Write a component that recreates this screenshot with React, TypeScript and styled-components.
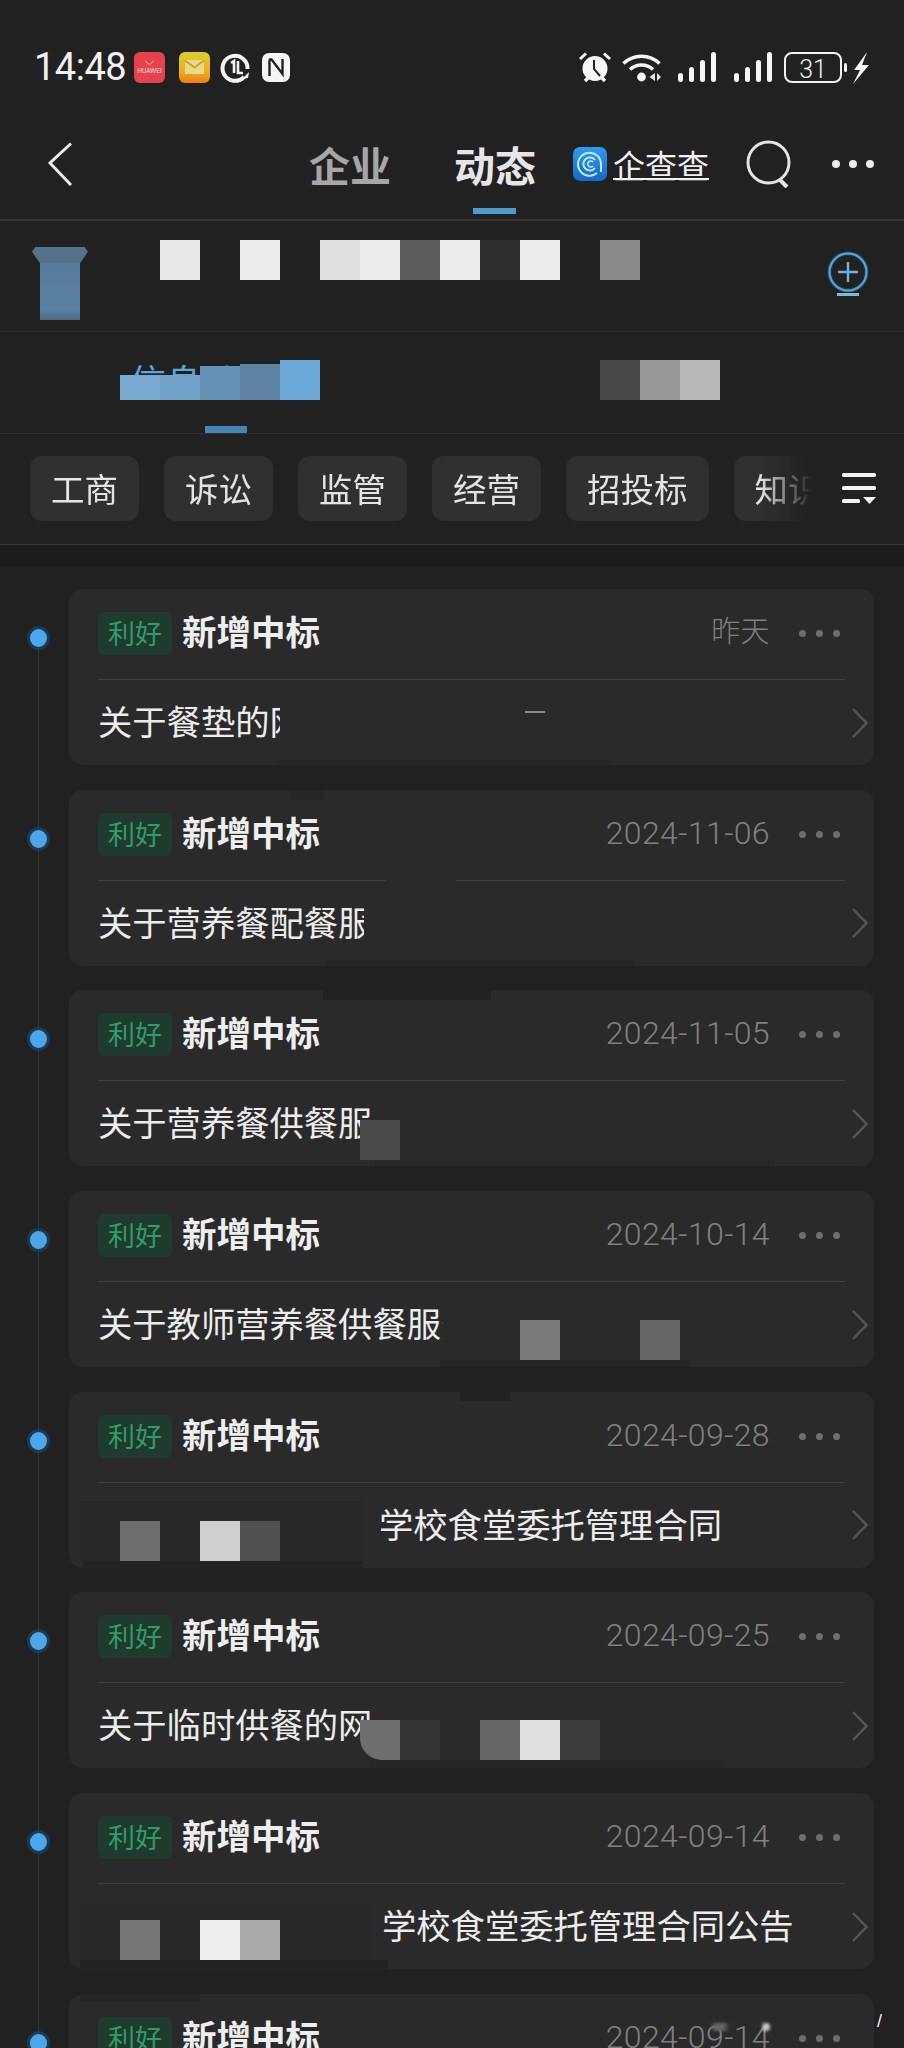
import React from 'react';
import styled, { createGlobalStyle } from 'styled-components';

const GlobalStyle = createGlobalStyle`
  html, body {
    margin: 0;
    padding: 0;
    background: #212121;
  }
  * {
    box-sizing: border-box;
  }
`;

const Page = styled.div`
  position: relative;
  width: 904px;
  height: 2048px;
  overflow: hidden;
  background: #212121;
  color: #eee;
  font-family: 'Noto Sans CJK SC', 'Noto Sans', sans-serif;
`;

/* status bar */
const StatusBar = styled.div`
  height: 100px;
  padding: 52px 34px 0 34px;
  display: flex;
  justify-content: space-between;
  align-items: flex-start;
`;

const StatusGroup = styled.div<{ $gap: number }>`
  display: flex;
  align-items: center;
  gap: ${p => p.$gap}px;
  height: 31px;
`;

const Time = styled.span`
  font-family: Roboto, sans-serif;
  font-size: 38px;
  line-height: 31px;
  letter-spacing: -0.5px;
  color: #f2f2f2;
  width: 90px;
  white-space: nowrap;
`;

/* header */
const Header = styled.div`
  height: 121px;
  padding: 8px 0 0 48px;
  display: flex;
  align-items: center;
  border-bottom: 2px solid #333;
`;

const HeaderTabs = styled.div`
  display: flex;
  gap: 63px;
  margin-left: 237px;
`;

const HeaderTab = styled.div<{ $active?: boolean }>`
  position: relative;
  width: 82px;
  font-size: 41px;
  line-height: 50px;
  font-weight: 700;
  white-space: nowrap;
  color: ${p => (p.$active ? '#e6e6e6' : '#a6a6a6')};

  ${p => p.$active && `
    &::after {
      content: '';
      position: absolute;
      left: 19px;
      top: 69px;
      width: 43px;
      height: 6px;
      background: #4f9bcb;
    }
  `}
`;

const BrandBlock = styled.div`
  display: flex;
  align-items: center;
  gap: 6px;
  margin-left: 37px;
`;

const BrandName = styled.span`
  font-size: 32px;
  line-height: 36px;
  font-weight: 400;
  color: #f0f0f0;
  text-decoration: underline;
  text-decoration-thickness: 2px;
  text-decoration-skip-ink: none;
  text-underline-offset: 0;
  white-space: nowrap;
`;

const SearchWrap = styled.div`
  margin-left: 37px;
  height: 48px;
`;

const DotsWrap = styled.div`
  margin-left: 40px;
  display: flex;
`;

/* company row */
const CompanyRow = styled.div`
  height: 111px;
  display: flex;
  border-bottom: 1px solid #2f2f2f;
`;

const CompanyLogo = styled.div`
  position: relative;
  width: 40px;
  height: 73px;
  margin: 26px 0 0 40px;
  background: linear-gradient(#57799a, #5b82a3 85%, #4c6a84);

  &::before {
    content: '';
    position: absolute;
    left: -8px;
    top: 0;
    width: 56px;
    height: 16px;
    clip-path: polygon(6% 0, 94% 0, 100% 30%, 86% 100%, 14% 100%, 0 30%);
    background: #54728c;
  }
`;

const FollowWrap = styled.div`
  margin: 30px 0 0 auto;
  padding-right: 35px;
`;

/* 40px wide censor tiles, lined up on a page-wide grid */
const Mosaic = styled.div<{ $cols: number }>`
  display: grid;
  grid-template-columns: repeat(${p => p.$cols}, 40px);
  grid-auto-rows: 40px;
`;

const Tile = styled.div<{ $col: number; $bg: string; $cut?: number; $corner?: boolean }>`
  grid-column: ${p => p.$col};
  grid-row: 1;
  background: ${p => p.$bg};
  margin-top: ${p => p.$cut || 0}px;
  border-bottom-left-radius: ${p => (p.$corner ? '22px' : '0')};
  filter: blur(0.4px);
`;

const CompanyMosaic = styled(Mosaic)`
  margin-top: 19px;
`;

/* sub tabs */
const SubTabs = styled.div`
  position: relative;
  height: 102px;
  padding: 28px 0 0 120px;
  border-bottom: 1px solid #2f2f2f;
`;

const HiddenTabLabel = styled.div`
  position: absolute;
  left: 130px;
  top: 24px;
  font-size: 36px;
  line-height: 48px;
  color: #5aa8dc;
  white-space: nowrap;
`;

const SubTabMosaic = styled(Mosaic)`
  position: relative;
`;

const SubTabMark = styled.div`
  position: absolute;
  left: 205px;
  top: 94px;
  width: 42px;
  height: 7px;
  background: #4a86b4;
`;

/* filters */
const FilterBar = styled.div`
  height: 111px;
  display: flex;
  align-items: flex-start;
  border-bottom: 1px solid #383838;
`;

const FilterScroll = styled.div`
  width: 815px;
  padding: 22px 0 0 30px;
  display: flex;
  gap: 25px;
  overflow: hidden;
  mask-image: linear-gradient(to right, #000 760px, transparent 812px);
`;

const FilterPill = styled.div`
  flex: none;
  height: 65px;
  padding: 0 21px;
  border-radius: 12px;
  background: #303030;
  color: #e4e4e4;
  font-size: 33.5px;
  font-weight: 400;
  line-height: 63px;
  white-space: nowrap;
`;

const FilterMenu = styled.div`
  margin: 39px 0 0 27px;
`;

const Band = styled.div`
  height: 21px;
  background: #1c1c1c;
`;

/* timeline */
const Timeline = styled.div`
  position: relative;
  padding: 23px 30px 0 69px;
  display: flex;
  flex-direction: column;
  gap: 24.7px;

  &::before {
    content: '';
    position: absolute;
    left: 38px;
    top: 60px;
    bottom: -400px;
    width: 1px;
    background: #363636;
  }
`;

const Card = styled.div`
  position: relative;
  flex: none;
  height: 176px;
  border-radius: 14px;
  background: #2a2a2a;
`;

const Dot = styled.div`
  position: absolute;
  left: -39px;
  top: 40px;
  width: 17px;
  height: 18px;
  border-radius: 50%;
  background: #4ea6ea;
  box-shadow: 0 0 0 3px #1b3a52;
`;

const CardHead = styled.div`
  height: 91px;
  margin: 0 29px;
  padding-top: 23px;
  display: flex;
  align-items: flex-start;
  border-bottom: 1px solid #404040;
`;

const Badge = styled.div`
  width: 74px;
  height: 43px;
  border-radius: 6px;
  background: #1f3a2e;
  color: #2f9c69;
  font-size: 27px;
  font-weight: 400;
  line-height: 41px;
  text-align: center;
  white-space: nowrap;
`;

const CardTitle = styled.div`
  margin: -3px 0 0 10px;
  font-size: 34.5px;
  line-height: 42px;
  font-weight: 700;
  color: #eeeeee;
  white-space: nowrap;
`;

const CardDate = styled.div<{ $words?: boolean }>`
  margin: -1px 0 0 auto;
  font-family: Roboto, 'Noto Sans CJK SC', sans-serif;
  font-size: ${p => (p.$words ? 29 : 32)}px;
  font-weight: 300;
  letter-spacing: 0.4px;
  line-height: 42px;
  color: #808080;
  white-space: nowrap;
`;

const CardDots = styled.div`
  margin: 18px 5px 0 29px;
  display: flex;
`;

const CardBody = styled.div`
  height: 85px;
  padding: 0 6px 0 29px;
  display: flex;
  align-items: center;
`;

const BodyText = styled.div<{ $clip: number; $indent?: number }>`
  width: ${p => p.$clip}px;
  margin: -5px 0 0 ${p => p.$indent || 0}px;
  overflow: hidden;
  font-size: 34.3px;
  font-weight: 400;
  line-height: 48px;
  color: #ececec;
  white-space: nowrap;
`;

const Chevron = styled.div`
  margin-left: auto;
  height: 30px;
`;

const CardMosaic = styled(Mosaic)<{ $top: number }>`
  position: absolute;
  left: -69px;
  top: ${p => p.$top}px;
`;

/* left-over smudges of the censoring along the card edges */
const Smudge = styled.div<{ $x: number; $y: number; $w: number; $h: number; $bg: string }>`
  position: absolute;
  left: ${p => p.$x}px;
  top: ${p => p.$y}px;
  width: ${p => p.$w}px;
  height: ${p => p.$h}px;
  background: ${p => p.$bg};
`;

const Watermark = styled.div`
  position: absolute;
  right: 22px;
  bottom: 18px;
  font-family: 'Liberation Sans', sans-serif;
  font-size: 18px;
  line-height: 18px;
  color: #eee;
`;

const WatermarkBlur = styled.div`
  position: absolute;
  left: 712px;
  top: 2023px;
  width: 58px;
  height: 8px;
  border-radius: 4px;
  background: linear-gradient(to right, #666 0 20%, transparent 30% 85%, #ccc 90%);
  filter: blur(1.5px);
`;

/* icons */
const HuaweiIcon = () => (
  <svg width="35" height="31" viewBox="0 0 35 31">
    <rect width="31" height="31" rx="6" fill="#e5434c" />
    <path d="M11 9 L15.5 12.5 L20 9" fill="none" stroke="#f5b5b5" strokeWidth="1" />
    <text x="15.5" y="21" fontSize="6.6" fontFamily="Roboto, sans-serif" fill="#f8dcdc" textAnchor="middle">HUAWEI</text>
  </svg>
);

const MailIcon = () => (
  <svg width="31" height="31" viewBox="0 0 31 31">
    <defs>
      <linearGradient id="mailFill" x1="0" y1="0" x2="0" y2="1">
        <stop offset="0" stopColor="#d9cf2e" />
        <stop offset="0.6" stopColor="#eeb020" />
        <stop offset="1" stopColor="#ef7d14" />
      </linearGradient>
    </defs>
    <rect width="31" height="31" rx="6" fill="url(#mailFill)" />
    <rect x="6" y="8" width="19" height="14" fill="#e9d98a" />
    <path d="M6 8.5 L15.5 15.5 L25 8.5" fill="none" stroke="#d49a1c" strokeWidth="1.6" />
  </svg>
);

const DataIcon = () => (
  <svg width="32" height="31" viewBox="0 0 32 31">
    <path d="M24 25 A12.5 12.5 0 1 1 27.5 17" fill="none" stroke="#f4f4f4" strokeWidth="4" />
    <path d="M11 11 L14 9 V21 M18 9 V21 H23" fill="none" stroke="#f4f4f4" strokeWidth="2.6" />
    <path d="M22 27 L29 20 L28 26 Z" fill="#f4f4f4" />
  </svg>
);

const NfcIcon = () => (
  <svg width="28" height="29" viewBox="0 0 28 29">
    <rect width="28" height="29" rx="7" fill="#f6f6f6" />
    <path d="M7.5 23 V8 Q7.5 5 10 7 L20.5 21 V6" fill="none" stroke="#222" strokeWidth="2.4" />
  </svg>
);

const AlarmIcon = () => (
  <svg width="32" height="31" viewBox="0 0 32 31">
    <circle cx="16" cy="16.5" r="12.5" fill="#f6f6f6" />
    <path d="M1 7 L7 1.5 M31 7 L25 1.5" stroke="#f6f6f6" strokeWidth="3" />
    <path d="M6 29 L9 26 M26 29 L23 26" stroke="#f6f6f6" strokeWidth="3.4" />
    <path d="M15 8 V17 L21 24" fill="none" stroke="#222" strokeWidth="2" />
  </svg>
);

const WifiIcon = () => (
  <svg width="45" height="31" viewBox="0 0 45 31">
    <path d="M1.5 11.5 A26 26 0 0 1 37.5 11.5" fill="none" stroke="#f6f6f6" strokeWidth="3.6" />
    <path d="M8 17.5 A17 17 0 0 1 31 17.5" fill="none" stroke="#f6f6f6" strokeWidth="3.6" />
    <circle cx="19.5" cy="25" r="4.4" fill="#f6f6f6" />
    <path d="M33 21 V29 L27.5 25 Z M35 21 V29 L39 25 Z" fill="#e4e4e4" />
  </svg>
);

const SignalIcon = ({ width }: { width: number }) => (
  <svg width={width} height="31" viewBox={`0 0 ${width} 31`}>
    <rect x="0" y="21" width="5" height="9" rx="2.5" fill="#f6f6f6" />
    <rect x="11" y="15" width="5" height="15" rx="2.5" fill="#f6f6f6" />
    <rect x="22" y="8" width="5" height="22" rx="2.5" fill="#f6f6f6" />
    <rect x="33" y="0" width="5" height="30" rx="2.5" fill="#f6f6f6" />
  </svg>
);

const BatteryIcon = () => (
  <svg width="86" height="32" viewBox="0 0 86 32">
    <rect x="1" y="1" width="56" height="29" rx="7" fill="none" stroke="#f2f2f2" strokeWidth="2" />
    <rect x="60" y="11" width="3" height="9" rx="1.5" fill="#f2f2f2" />
    <text x="29" y="25.5" fontSize="25" fontFamily="Roboto, sans-serif" fontWeight="300" fill="#f2f2f2" textAnchor="middle">31</text>
    <path d="M83 0 L70 18 H76 L69 32 L85 13 H78 Z" fill="#f6f6f6" />
  </svg>
);

const BackIcon = () => (
  <svg width="24" height="44" viewBox="0 0 24 44">
    <path d="M23 1.5 L2 21 L23 43" fill="none" stroke="#ececec" strokeWidth="3" />
  </svg>
);

const BrandLogo = () => (
  <svg width="34" height="34" viewBox="0 0 34 34">
    <defs>
      <linearGradient id="brandFill" x1="0" y1="0" x2="0" y2="1">
        <stop offset="0" stopColor="#2f9bee" />
        <stop offset="1" stopColor="#1668c8" />
      </linearGradient>
    </defs>
    <rect width="34" height="34" rx="7" fill="url(#brandFill)" />
    <path d="M24 26 A11.5 11.5 0 1 1 28 18 V25" fill="none" stroke="#bfeaf5" strokeWidth="2" />
    <path d="M22 21 A6.5 6.5 0 1 1 22 13" fill="none" stroke="#bfeaf5" strokeWidth="2" />
    <path d="M20 19 A3 3 0 1 1 20 15" fill="none" stroke="#bfeaf5" strokeWidth="1.6" />
  </svg>
);

const SearchIcon = () => (
  <svg width="46" height="48" viewBox="0 0 46 48">
    <circle cx="22.5" cy="22.5" r="20.5" fill="none" stroke="#e4e4e4" strokeWidth="3" />
    <path d="M33 39 L41 47" stroke="#e4e4e4" strokeWidth="4" />
  </svg>
);

const DotRow = ({ size, gap, color }: { size: number; gap: number; color: string }) => (
  <svg width={size * 3 + gap * 2} height={size} viewBox={`0 0 ${size * 3 + gap * 2} ${size}`}>
    {[0, 1, 2].map(i => (
      <circle key={i} cx={size / 2 + i * (size + gap)} cy={size / 2} r={size / 2} fill={color} />
    ))}
  </svg>
);

const FollowIcon = () => (
  <svg width="42" height="48" viewBox="0 0 42 48">
    <circle cx="21" cy="21" r="18.5" fill="none" stroke="#16324a" strokeWidth="5" />
    <circle cx="21" cy="21" r="18.5" fill="none" stroke="#5a9fca" strokeWidth="2.4" />
    <path d="M21 11 V31 M11 21 H31" stroke="#72b4de" strokeWidth="2.4" />
    <rect x="10" y="42" width="22" height="3" fill="#8cb6cf" />
  </svg>
);

const FilterMenuIcon = () => (
  <svg width="34" height="31" viewBox="0 0 34 31">
    <rect x="0" y="0" width="34" height="4" rx="1.5" fill="#f2f2f2" />
    <rect x="0" y="13" width="34" height="4" rx="1.5" fill="#f2f2f2" />
    <rect x="0" y="26" width="18" height="4" rx="1.5" fill="#f2f2f2" />
    <path d="M21 24 H34 L27.5 31 Z" fill="#f2f2f2" />
  </svg>
);

const ChevronIcon = () => (
  <svg width="16" height="30" viewBox="0 0 16 30">
    <path d="M1 1 L14.5 15 L1 29" fill="none" stroke="#565656" strokeWidth="2.4" />
  </svg>
);

type TileData = { col: number; bg: string; corner?: boolean };
type SmudgeData = { x: number; y: number; w: number; h: number; bg: string };

interface Notice {
  date: string;
  text: string;
  clip: number;
  indent?: number;
  tiles?: TileData[];
  tileTop?: number;
  smudges?: SmudgeData[];
}

const notices: Notice[] = [
  {
    date: '昨天',
    text: '关于餐垫的网',
    clip: 182,
    smudges: [
      { x: 208, y: 171, w: 334, h: 5, bg: '#252525' },
      { x: 456, y: 122, w: 20, h: 2, bg: '#8a8a8a' },
    ],
  },
  {
    date: '2024-11-06',
    text: '关于营养餐配餐服',
    clip: 266,
    smudges: [
      { x: 221, y: 0, w: 33, h: 10, bg: '#262626' },
      { x: 317, y: 89, w: 70, h: 3, bg: '#2a2a2a' },
      { x: 256, y: 170, w: 310, h: 6, bg: '#262626' },
    ],
  },
  {
    date: '2024-11-05',
    text: '关于营养餐供餐服务',
    clip: 274,
    tiles: [{ col: 10, bg: '#4a4a4a' }],
    tileTop: 130,
    smudges: [
      { x: 254, y: 0, w: 168, h: 10, bg: '#222222' },
      { x: 306, y: 170, w: 400, h: 6, bg: '#272727' },
    ],
  },
  {
    date: '2024-10-14',
    text: '关于教师营养餐供餐服务',
    clip: 345,
    tiles: [
      { col: 14, bg: '#7a7a7a' },
      { col: 17, bg: '#666666' },
    ],
    tileTop: 129,
    smudges: [{ x: 371, y: 169, w: 250, h: 7, bg: '#252525' }],
  },
  {
    date: '2024-09-28',
    text: '学校食堂委托管理合同',
    clip: 346,
    indent: 281,
    tiles: [
      { col: 4, bg: '#6e6e6e' },
      { col: 6, bg: '#d0d0d0' },
      { col: 7, bg: '#505050' },
    ],
    tileTop: 129,
    smudges: [
      { x: 391, y: 0, w: 50, h: 9, bg: '#222222' },
      { x: 11, y: 109, w: 284, h: 60, bg: '#282828' },
      { x: 14, y: 169, w: 280, h: 7, bg: '#232323' },
    ],
  },
  {
    date: '2024-09-25',
    text: '关于临时供餐的网',
    clip: 274,
    tiles: [
      { col: 10, bg: '#6e6e6e', corner: true },
      { col: 11, bg: '#333333' },
      { col: 13, bg: '#666666' },
      { col: 14, bg: '#e0e0e0' },
      { col: 15, bg: '#3c3c3c' },
    ],
    tileTop: 128,
    smudges: [{ x: 301, y: 168, w: 355, h: 8, bg: '#272727' }],
  },
  {
    date: '2024-09-14',
    text: '学校食堂委托管理合同公告',
    clip: 412,
    indent: 284,
    tiles: [
      { col: 4, bg: '#777777' },
      { col: 6, bg: '#eeeeee' },
      { col: 7, bg: '#a8a8a8' },
    ],
    tileTop: 127,
    smudges: [
      { x: 11, y: 109, w: 290, h: 58, bg: '#282828' },
      { x: 11, y: 167, w: 308, h: 9, bg: '#232323' },
    ],
  },
  {
    date: '2024-09-14',
    text: '',
    clip: 0,
    smudges: [{ x: 11, y: 0, w: 120, h: 8, bg: '#252525' }],
  },
];

const NoticeCard = ({ notice }: { notice: Notice }) => (
  <Card>
    <Dot />
    <CardHead>
      <Badge>利好</Badge>
      <CardTitle>新增中标</CardTitle>
      <CardDate $words={notice.date === '昨天'}>{notice.date}</CardDate>
      <CardDots>
        <DotRow size={7} gap={10} color="#6e6e6e" />
      </CardDots>
    </CardHead>
    <CardBody>
      <BodyText $clip={notice.clip} $indent={notice.indent}>{notice.text}</BodyText>
      <Chevron>
        <ChevronIcon />
      </Chevron>
    </CardBody>
    {notice.smudges?.map((s, i) => (
      <Smudge key={i} $x={s.x} $y={s.y} $w={s.w} $h={s.h} $bg={s.bg} />
    ))}
    {notice.tiles && (
      <CardMosaic $cols={18} $top={notice.tileTop || 128}>
        {notice.tiles.map(t => (
          <Tile key={t.col} $col={t.col} $bg={t.bg} $corner={t.corner} />
        ))}
      </CardMosaic>
    )}
  </Card>
);

const filters = ['工商', '诉讼', '监管', '经营', '招投标', '知识产权'];

const App: React.FC = () => {
  return (
    <Page>
      <GlobalStyle />
      <StatusBar>
        <StatusGroup $gap={10}>
          <Time>14:48</Time>
          <HuaweiIcon />
          <MailIcon />
          <DataIcon />
          <NfcIcon />
        </StatusGroup>
        <StatusGroup $gap={11}>
          <AlarmIcon />
          <WifiIcon />
          <SignalIcon width={45} />
          <SignalIcon width={39} />
          <BatteryIcon />
        </StatusGroup>
      </StatusBar>

      <Header>
        <BackIcon />
        <HeaderTabs>
          <HeaderTab>企业</HeaderTab>
          <HeaderTab $active>动态</HeaderTab>
        </HeaderTabs>
        <BrandBlock>
          <BrandLogo />
          <BrandName>企查查</BrandName>
        </BrandBlock>
        <SearchWrap>
          <SearchIcon />
        </SearchWrap>
        <DotsWrap>
          <DotRow size={8} gap={9} color="#ececec" />
        </DotsWrap>
      </Header>

      <CompanyRow>
        <CompanyLogo />
        <CompanyMosaic $cols={14}>
          <Tile $col={3} $bg="#e8e8e8" />
          <Tile $col={5} $bg="#ebebeb" />
          <Tile $col={7} $bg="#e0e0e0" />
          <Tile $col={8} $bg="#ececec" />
          <Tile $col={9} $bg="#5c5c5c" />
          <Tile $col={10} $bg="#ececec" />
          <Tile $col={11} $bg="#2e2e2e" />
          <Tile $col={12} $bg="#ececec" />
          <Tile $col={14} $bg="#8a8a8a" />
        </CompanyMosaic>
        <FollowWrap>
          <FollowIcon />
        </FollowWrap>
      </CompanyRow>

      <SubTabs>
        <HiddenTabLabel>信息动态</HiddenTabLabel>
        <SubTabMosaic $cols={15}>
          <Tile $col={1} $bg="#78a9cf" $cut={15} />
          <Tile $col={2} $bg="#72a2c8" $cut={15} />
          <Tile $col={3} $bg="#6490b4" $cut={6} />
          <Tile $col={4} $bg="#5f84a5" $cut={4} />
          <Tile $col={5} $bg="#6ba8d8" />
          <Tile $col={13} $bg="#484848" />
          <Tile $col={14} $bg="#969696" />
          <Tile $col={15} $bg="#b8b8b8" />
        </SubTabMosaic>
        <SubTabMark />
      </SubTabs>

      <FilterBar>
        <FilterScroll>
          {filters.map(f => (
            <FilterPill key={f}>{f}</FilterPill>
          ))}
        </FilterScroll>
        <FilterMenu>
          <FilterMenuIcon />
        </FilterMenu>
      </FilterBar>
      <Band />

      <Timeline>
        {notices.map((n, i) => (
          <NoticeCard key={i} notice={n} />
        ))}
      </Timeline>

      <WatermarkBlur />
      <Watermark>/</Watermark>
    </Page>
  );
};

export default App;
